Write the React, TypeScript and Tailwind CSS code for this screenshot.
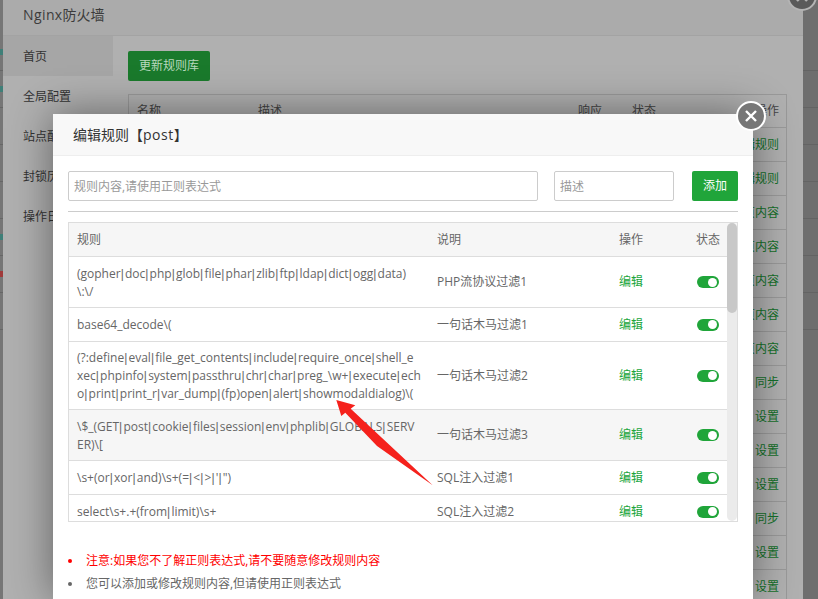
const font = { fontFamily: '"Open Sans", "Noto Sans CJK SC", sans-serif' };

const bgActions = ['编辑规则', '编辑规则', '页内容', '页内容', '页内容', '页内容', '页内容', '同步', '设置', '设置', '设置', '同步', '设置', '设置'];

const rules = [
  { lines: ['(gopher|doc|php|glob|file|phar|zlib|ftp|ldap|dict|ogg|data)', '\\:\\/'], note: 'PHP流协议过滤1', h: 'h-[51px]' },
  { lines: ['base64_decode\\('], note: '一句话木马过滤1', h: 'h-[34px]' },
  { lines: ['(?:define|eval|file_get_contents|include|require_once|shell_e', 'xec|phpinfo|system|passthru|chr|char|preg_\\w+|execute|ech', 'o|print|print_r|var_dump|(fp)open|alert|showmodaldialog)\\('], note: '一句话木马过滤2', h: 'h-[68px]' },
  { lines: ['\\$_(GET|post|cookie|files|session|env|phplib|GLOBALS|SERV', 'ER)\\['], note: '一句话木马过滤3', h: 'h-[51px]', hover: true },
  { lines: ['\\s+(or|xor|and)\\s+(=|<|>|\'|")'], note: 'SQL注入过滤1', h: 'h-[34px]' },
  { lines: ['select\\s+.+(from|limit)\\s+'], note: 'SQL注入过滤2', h: 'h-[34px]' },
];

// bits of the page behind the dialogs, only 3px of it shows on the left
const leftBits = ['bg-[#3f7f78]', 'bg-[#3f7f78]', '', '', '', 'bg-[#3f7f78]', 'bg-[#a03a3a]', ''];

// the pipes are narrow in the original font
function RuleLine({ text }: { text: string }) {
  const parts = text.split('|');
  return (
    <div>
      {parts.map((p, i) => (
        <span key={i}>
          {i > 0 && <span className="font-['Liberation_Sans'] tracking-[1.2px]">|</span>}
          {p}
        </span>
      ))}
    </div>
  );
}

function Toggle() {
  return (
    <div className="flex h-[12px] w-[22px] items-center justify-end rounded-full bg-[#20a53a] pr-[2px]">
      <div className="h-[9px] w-[9px] rounded-full bg-white" />
    </div>
  );
}

function BackdropPage() {
  return (
    <div className="flex h-[599px] bg-[#6e6e6e]">
      <div className="w-[3px] shrink-0 bg-[#767676] pt-[34px]">
        {leftBits.map((c, i) => (
          <div key={i} className="flex h-[37px] items-center border-b border-[#666]">
            {c && <div className={`h-[6px] w-full ${c}`} />}
          </div>
        ))}
      </div>
      <div className="flex w-[800px] shrink-0 flex-col bg-[#b0b0b0]">
        <div className="flex h-[36px] shrink-0 items-center border-b border-[#a3a3a3] bg-[#ababab] pb-[6px] pl-[20px] text-[14px] text-[#3c3c3c]">
          <span className="tracking-[0.4px]">Nginx</span>防火墙
        </div>
        <div className="flex min-h-0 flex-1">
          <div className="w-[110px] shrink-0 text-[12px] text-[#333]">
            <div className="flex h-[40px] items-center bg-[#a6a6a6] pl-[20px] pt-[2px]">首页</div>
            <div className="flex h-[40px] items-center bg-[#b0b0b0] pl-[20px] pt-[2px]">全局配置</div>
            <div className="flex h-[40px] items-center pl-[20px] pt-[2px]">站点配置</div>
            <div className="flex h-[40px] items-center pl-[20px] pt-[2px]">封锁历史</div>
            <div className="flex h-[40px] items-center pl-[20px] pt-[2px]">操作日志</div>
          </div>
          <div className="min-w-0 flex-1 pl-[15px] pr-[16px] pt-[15px]">
            <div className="flex h-[30px] w-[82px] items-center justify-center rounded-[2px] bg-[#1a7a2c] text-[12px] text-[#b8d8be]">
              更新规则库
            </div>
            <div className="mt-[13px] border-x border-t border-[#999] text-[12px] text-[#444]">
              <div className="flex h-[33px] items-center border-b border-[#999] pl-[8px] pr-[7px]">
                <span className="w-[121px]">名称</span>
                <span className="w-[320px]">描述</span>
                <span className="w-[54px]">响应</span>
                <span className="flex-1">状态</span>
                <span>操作</span>
              </div>
              {bgActions.map((a, i) => (
                <div key={i} className="flex h-[34px] items-center justify-end border-b border-[#999] pr-[7px] text-[#14702a]">
                  {a}
                </div>
              ))}
            </div>
          </div>
        </div>
      </div>
      <div className="min-w-0 flex-1 pt-[34px]">
        {leftBits.map((_, i) => (
          <div key={i} className="h-[37px] border-b border-[#636363]" />
        ))}
      </div>
    </div>
  );
}

function RuleTable() {
  return (
    <div className="relative mt-[10px] h-[300px] overflow-hidden border border-[#ddd] text-[12px] text-[#666]">
      <div className="flex h-[34px] items-center border-b border-[#ddd] bg-[#f6f6f6]">
        <div className="w-[368px] pl-[8px]">规则</div>
        <div className="w-[182px]">说明</div>
        <div className="w-[77px]">操作</div>
        <div>状态</div>
      </div>
      {rules.map((r, i) => (
        <div key={i} className={`flex shrink-0 items-center border-b border-[#ddd] ${r.h} ${r.hover ? 'bg-[#f6f6f6]' : ''}`}>
          <div className="w-[368px] whitespace-nowrap pl-[8px] leading-[17px]">
            {r.lines.map((l) => (
              <RuleLine key={l} text={l} />
            ))}
          </div>
          <div className="w-[182px]">{r.note}</div>
          <div className="w-[78px] text-[#20a53a]">编辑</div>
          <Toggle />
        </div>
      ))}
      <div className="absolute bottom-0 right-0 top-0 w-[10px] rounded-[5px] bg-[#ebebeb]">
        <div className="h-[90px] rounded-[5px] bg-[#c8c8c8]" />
      </div>
    </div>
  );
}

function RuleModal() {
  return (
    <div className="absolute left-[53px] top-[114px] h-[485px] w-[700px] bg-white shadow-[0_0_40px_rgba(0,0,0,0.45)]">
      <div className="flex h-[42px] items-center border-b border-[#eee] bg-[#f8f8f8] pl-[20px] text-[14px] text-[#333]">
        编辑规则【<span className="tracking-[0.5px]">post</span>】
      </div>
      <div className="px-[15px] pt-[15px]">
        <div className="flex items-center border-b border-[#ccc] pb-[10px]">
          <input readOnly placeholder="规则内容,请使用正则表达式" className="h-[30px] w-[470px] rounded-[2px] border border-[#ccc] px-[5px] text-[12px] placeholder:text-[#999]" />
          <input readOnly placeholder="描述" className="ml-[16px] h-[30px] w-[120px] rounded-[2px] border border-[#ccc] px-[5px] text-[12px] placeholder:text-[#999]" />
          <button className="ml-[18px] h-[30px] w-[46px] rounded-[2px] bg-[#20a53a] text-[12px] text-white">添加</button>
        </div>
        <RuleTable />
        <ul className="mt-[27px] text-[12px]">
          <li className="flex h-[23px] items-center text-[#f00]">
            <span className="mr-[14px] h-[4px] w-[4px] rounded-full bg-[#f00]" />
            注意:如果您不了解正则表达式,请不要随意修改规则内容
          </li>
          <li className="flex h-[23px] items-center text-[#666]">
            <span className="mr-[14px] h-[4px] w-[4px] rounded-full bg-[#666]" />
            您可以添加或修改规则内容,但请使用正则表达式
          </li>
        </ul>
      </div>
    </div>
  );
}

function CloseBadge({ className }: { className: string }) {
  return (
    <div className={`absolute flex items-center justify-center rounded-full border-[2px] ${className}`}>
      <svg width="14" height="14" viewBox="0 0 14 14" fill="none" stroke="currentColor" strokeWidth="2.4">
        <path d="M2 2L12 12M12 2L2 12" />
      </svg>
    </div>
  );
}

export default function App() {
  return (
    <div className="relative h-[599px] w-[818px] overflow-hidden" style={font}>
      <BackdropPage />
      <CloseBadge className="left-[787px] top-[-19px] h-[30px] w-[30px] border-[#b4b4b4] bg-[#5a5a5a] text-[#b4b4b4]" />
      <RuleModal />
      <CloseBadge className="left-[736px] top-[101px] h-[30px] w-[30px] border-white bg-[#777] text-white" />
      <svg className="pointer-events-none absolute left-0 top-0" width="818" height="599">
        <polygon points="336.3,400 355.3,405.3 350.7,408.7 432.7,485.3 377,446 345.3,412.7 341.3,416" fill="#f5211c" />
      </svg>
    </div>
  );
}
